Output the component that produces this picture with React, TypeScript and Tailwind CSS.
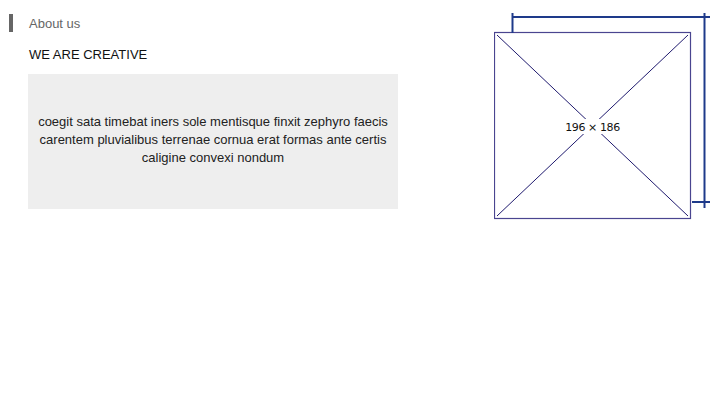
export default function App() {
  return (
    <div className="flex w-[710px] h-[417px] bg-white font-['Liberation_Sans',Arial,sans-serif] overflow-hidden">
      <div className="w-[398px] pt-[13px]">
        <div className="flex items-center h-[20px] pl-[9px]">
          <span className="w-[4px] h-[18px] bg-[#666]" />
          <span className="ml-[16px] mt-[2px] text-[13px] leading-[20px] text-[#666]">About us</span>
        </div>
        <h2 className="mt-[12px] pl-[29px] text-[13px] leading-[20px] text-[#111] uppercase">We are creative</h2>
        <div className="ml-[28px] mt-[9px] w-[370px] h-[135px] bg-[#eee] flex items-center justify-center text-center px-[8px] pb-[3px]">
          <p className="text-[13px] leading-[18px] text-[#222]">
            coegit sata timebat iners sole mentisque finxit zephyro faecis carentem pluvialibus terrenae cornua erat formas ante certis caligine convexi nondum
          </p>
        </div>
      </div>
      <div className="ml-[96px] pt-[12px]">
        <svg width="216" height="210" viewBox="0 0 216 210">
          <rect x="0.5" y="20.5" width="196" height="186" fill="#fff" stroke="#4a4590" strokeWidth="1.2" />
          <line x1="3" y1="23" x2="194" y2="204" stroke="#1f1a6e" strokeWidth="1" />
          <line x1="194" y1="23" x2="3" y2="204" stroke="#1f1a6e" strokeWidth="1" />
          <rect x="71" y="107" width="55" height="15" fill="#fff" />
          <text x="98.5" y="119" textAnchor="middle" fontSize="11" letterSpacing="-0.4" fill="#111" fontFamily="'DejaVu Sans', sans-serif">196 × 186</text>
          <g stroke="#1e3a8a" strokeWidth="2" fill="none">
            <line x1="18" y1="5" x2="216" y2="5" />
            <line x1="18.5" y1="1" x2="18.5" y2="21" />
            <line x1="210.5" y1="1" x2="210.5" y2="196" />
            <line x1="198" y1="190" x2="216" y2="190" />
          </g>
        </svg>
      </div>
    </div>
  );
}
